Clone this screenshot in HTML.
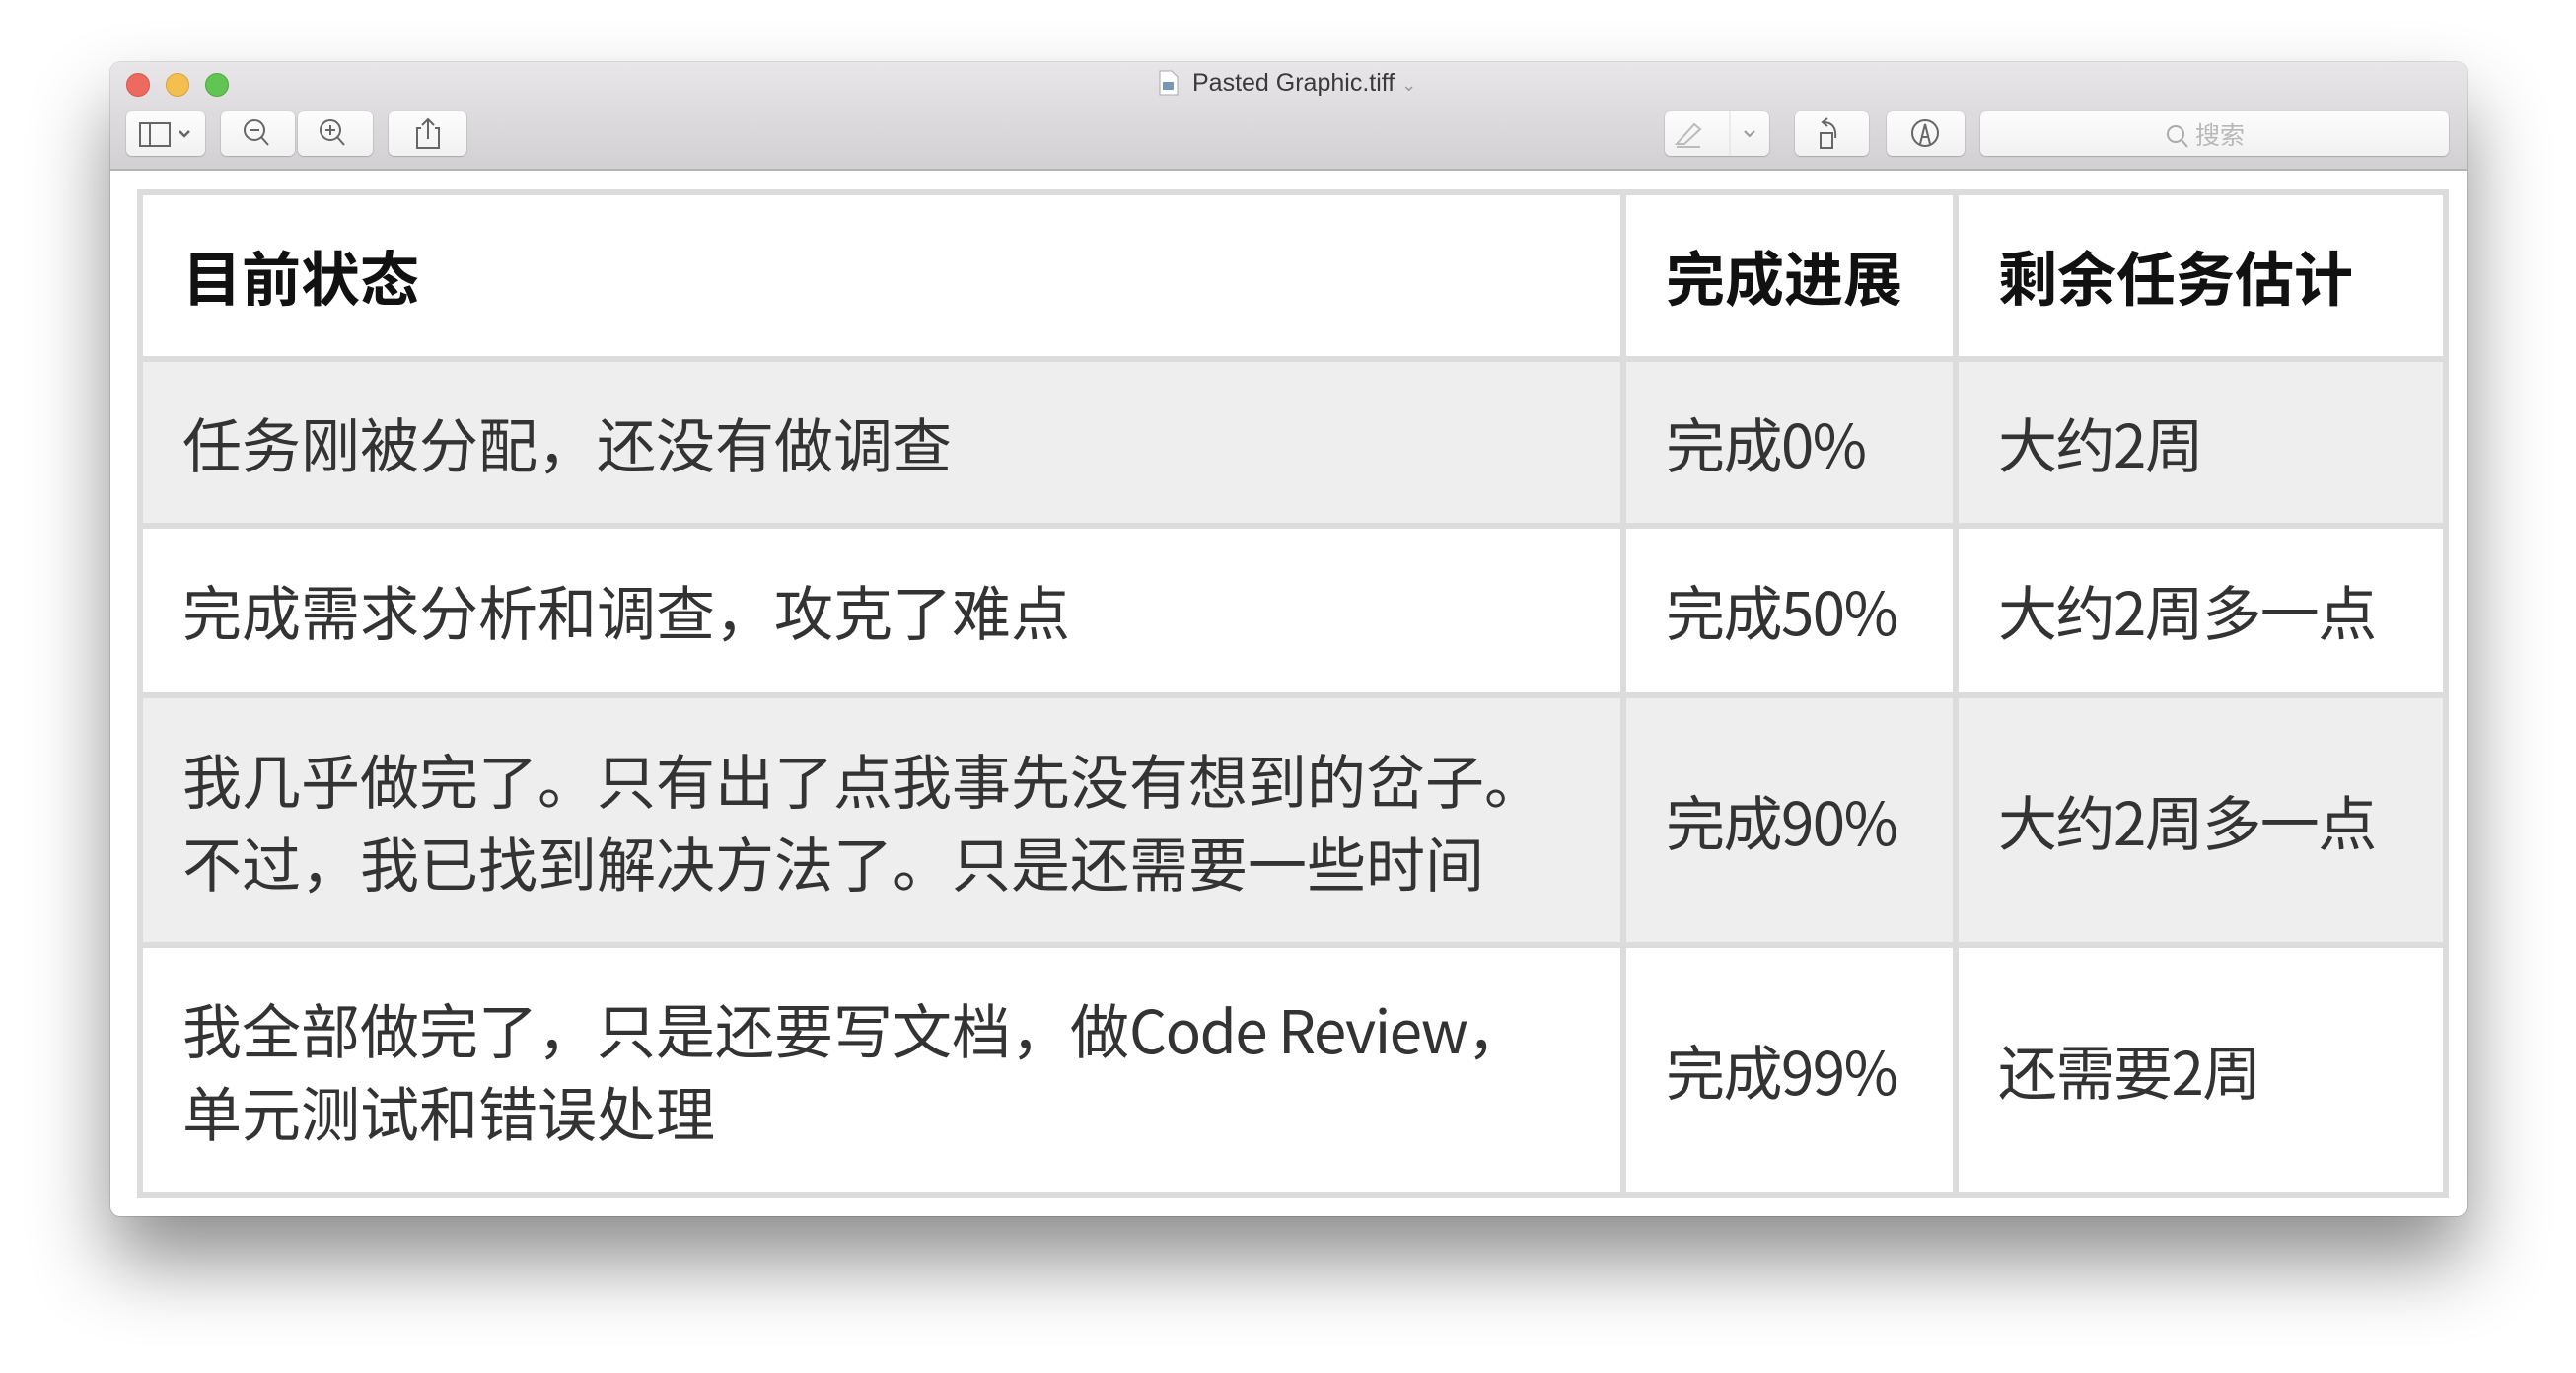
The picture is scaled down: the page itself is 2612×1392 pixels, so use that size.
<!DOCTYPE html>
<html><head><meta charset="utf-8"><style>
*{margin:0;padding:0;box-sizing:border-box}
body{width:2612px;height:1392px;background:#fff;position:relative;overflow:hidden;font-family:"Liberation Sans","Noto Sans CJK SC",sans-serif}
.win{position:absolute;left:112px;top:63px;width:2389px;height:1170px;background:#fff;border-radius:10px;box-shadow:0 45px 80px rgba(0,0,0,.45),0 0 0 1px rgba(0,0,0,.12);overflow:hidden}
.tb{position:absolute;left:0;top:0;width:100%;height:110px;background:linear-gradient(#e8e6e8,#d2d0d2);border-bottom:2px solid #b4b4b4}
.dot{position:absolute;top:11px;width:24px;height:24px;border-radius:50%}
.btn{position:absolute;top:50px;height:45px;background:linear-gradient(#fdfdfd,#f1f1f1);border-radius:6px;box-shadow:0 0.5px 1.5px rgba(0,0,0,.35)}
.title{position:absolute;top:7px;left:1063px;font-size:25px;color:#3a3a3a;font-family:"Liberation Sans",sans-serif}
.c{position:absolute;display:flex;align-items:center;padding-left:40px;font-family:"Noto Sans CJK SC",sans-serif;font-size:60px;color:#333;line-height:84px}
.n{letter-spacing:-1.5px}
.h{font-weight:bold;color:#111}
</style></head><body>
<div class="win">
<div class="tb">
<div class="dot" style="left:16px;background:#ec6a5f;border:1px solid #d5554b"></div>
<div class="dot" style="left:56px;background:#f5bf4f;border:1px solid #d9a23a"></div>
<div class="dot" style="left:96px;background:#61c554;border:1px solid #4ea93f"></div>
<div class="title"><svg width="20" height="26" viewBox="0 0 20 26" style="vertical-align:-5px;margin-right:14px"><path d="M1 1h12l6 6v18H1z" fill="#fff" stroke="#aaa"/><rect x="4" y="12" width="11" height="8" fill="#7896b8"/></svg>Pasted Graphic.tiff <span style="color:#999;font-size:18px">&#8964;</span></div>
<div class="btn" style="left:16px;width:80px"><svg width="80" height="45"><rect x="14" y="12" width="30" height="23" fill="none" stroke="#666" stroke-width="2"/><line x1="24" y1="12" x2="24" y2="35" stroke="#666" stroke-width="2"/><path d="M54 20l5 5 5-5" fill="none" stroke="#666" stroke-width="2.5"/></svg></div>
<div class="btn" style="left:112px;width:75px"><svg width="75" height="45"><circle cx="34" cy="19" r="10" fill="none" stroke="#666" stroke-width="2"/><line x1="29" y1="19" x2="39" y2="19" stroke="#666" stroke-width="2"/><line x1="41" y1="26" x2="48" y2="34" stroke="#666" stroke-width="2"/></svg></div>
<div class="btn" style="left:190px;width:76px"><svg width="76" height="45"><circle cx="33" cy="19" r="10" fill="none" stroke="#666" stroke-width="2"/><line x1="28" y1="19" x2="38" y2="19" stroke="#666" stroke-width="2"/><line x1="33" y1="14" x2="33" y2="24" stroke="#666" stroke-width="2"/><line x1="40" y1="26" x2="47" y2="34" stroke="#666" stroke-width="2"/></svg></div>
<div class="btn" style="left:282px;width:79px"><svg width="79" height="45"><path d="M33 17h-4v20h22V17h-4M40 28V8M34 14l6-6 6 6" fill="none" stroke="#666" stroke-width="2"/></svg></div>
<div class="btn" style="left:1576px;width:106px"><svg width="106" height="45"><path d="M12 33l18-20 6 5-16 15zM12 36h24" fill="none" stroke="#bbb" stroke-width="2"/><line x1="66" y1="0" x2="66" y2="45" stroke="#ddd"/><path d="M81 20l5 5 5-5" fill="none" stroke="#999" stroke-width="2"/></svg></div>
<div class="btn" style="left:1708px;width:75px"><svg width="75" height="45"><rect x="26" y="22" width="12" height="15" fill="none" stroke="#666" stroke-width="2"/><path d="M33 7l-5 4 5 4M29 11c10 0 13 7 12 16" fill="none" stroke="#666" stroke-width="2"/></svg></div>
<div class="btn" style="left:1801px;width:79px"><svg width="79" height="45"><circle cx="39" cy="22" r="13" fill="none" stroke="#666" stroke-width="2"/><path d="M34 33l5-20 5 20M36 26h6" fill="none" stroke="#666" stroke-width="2"/></svg></div>
<div class="btn" style="left:1896px;width:475px"><div style="position:absolute;left:188px;top:5px;font-family:'Noto Sans CJK SC',sans-serif;font-size:25px;color:#b8b8b8"><svg width="24" height="26" style="vertical-align:-5px;margin-right:6px"><circle cx="10" cy="11" r="8" fill="none" stroke="#aaa" stroke-width="2"/><line x1="16" y1="17" x2="22" y2="24" stroke="#aaa" stroke-width="2"/></svg>搜索</div></div>
</div>
</div>
<div style="position:absolute;left:139px;top:192px;width:2344px;height:1023px;background:#dcdcdc"></div>
<div class="c h" style="left:145px;top:198px;width:1498px;height:163px;background:#fff">目前状态</div>
<div class="c h" style="left:1649px;top:198px;width:331px;height:163px;background:#fff;padding-left:40px">完成进展</div>
<div class="c h" style="left:1986px;top:198px;width:491px;height:163px;background:#fff;padding-left:40px">剩余任务估计</div>

<div class="c" style="left:145px;top:367px;width:1498px;height:163px;background:#eee">任务刚被分配，还没有做调查</div>
<div class="c n" style="left:1649px;top:367px;width:331px;height:163px;background:#eee;padding-left:40px">完成0%</div>
<div class="c n" style="left:1986px;top:367px;width:491px;height:163px;background:#eee;padding-left:40px">大约2周</div>

<div class="c" style="left:145px;top:536px;width:1498px;height:166px;background:#fff">完成需求分析和调查，攻克了难点</div>
<div class="c n" style="left:1649px;top:536px;width:331px;height:166px;background:#fff;padding-left:40px">完成50%</div>
<div class="c n" style="left:1986px;top:536px;width:491px;height:166px;background:#fff;padding-left:40px">大约2周多一点</div>

<div class="c" style="left:145px;top:708px;width:1498px;height:247px;background:#eee"><div>我几乎做完了。只有出了点我事先没有想到的岔子。<br>不过，我已找到解决方法了。只是还需要一些时间</div></div>
<div class="c n" style="left:1649px;top:708px;width:331px;height:247px;background:#eee;padding-left:40px">完成90%</div>
<div class="c n" style="left:1986px;top:708px;width:491px;height:247px;background:#eee;padding-left:40px">大约2周多一点</div>

<div class="c" style="left:145px;top:961px;width:1498px;height:247px;background:#fff"><div>我全部做完了，只是还要写文档，做<span style="letter-spacing:-1.5px">Code Review</span>，<br>单元测试和错误处理</div></div>
<div class="c n" style="left:1649px;top:961px;width:331px;height:247px;background:#fff;padding-left:40px">完成99%</div>
<div class="c n" style="left:1986px;top:961px;width:491px;height:247px;background:#fff;padding-left:40px">还需要2周</div>
</body></html>
